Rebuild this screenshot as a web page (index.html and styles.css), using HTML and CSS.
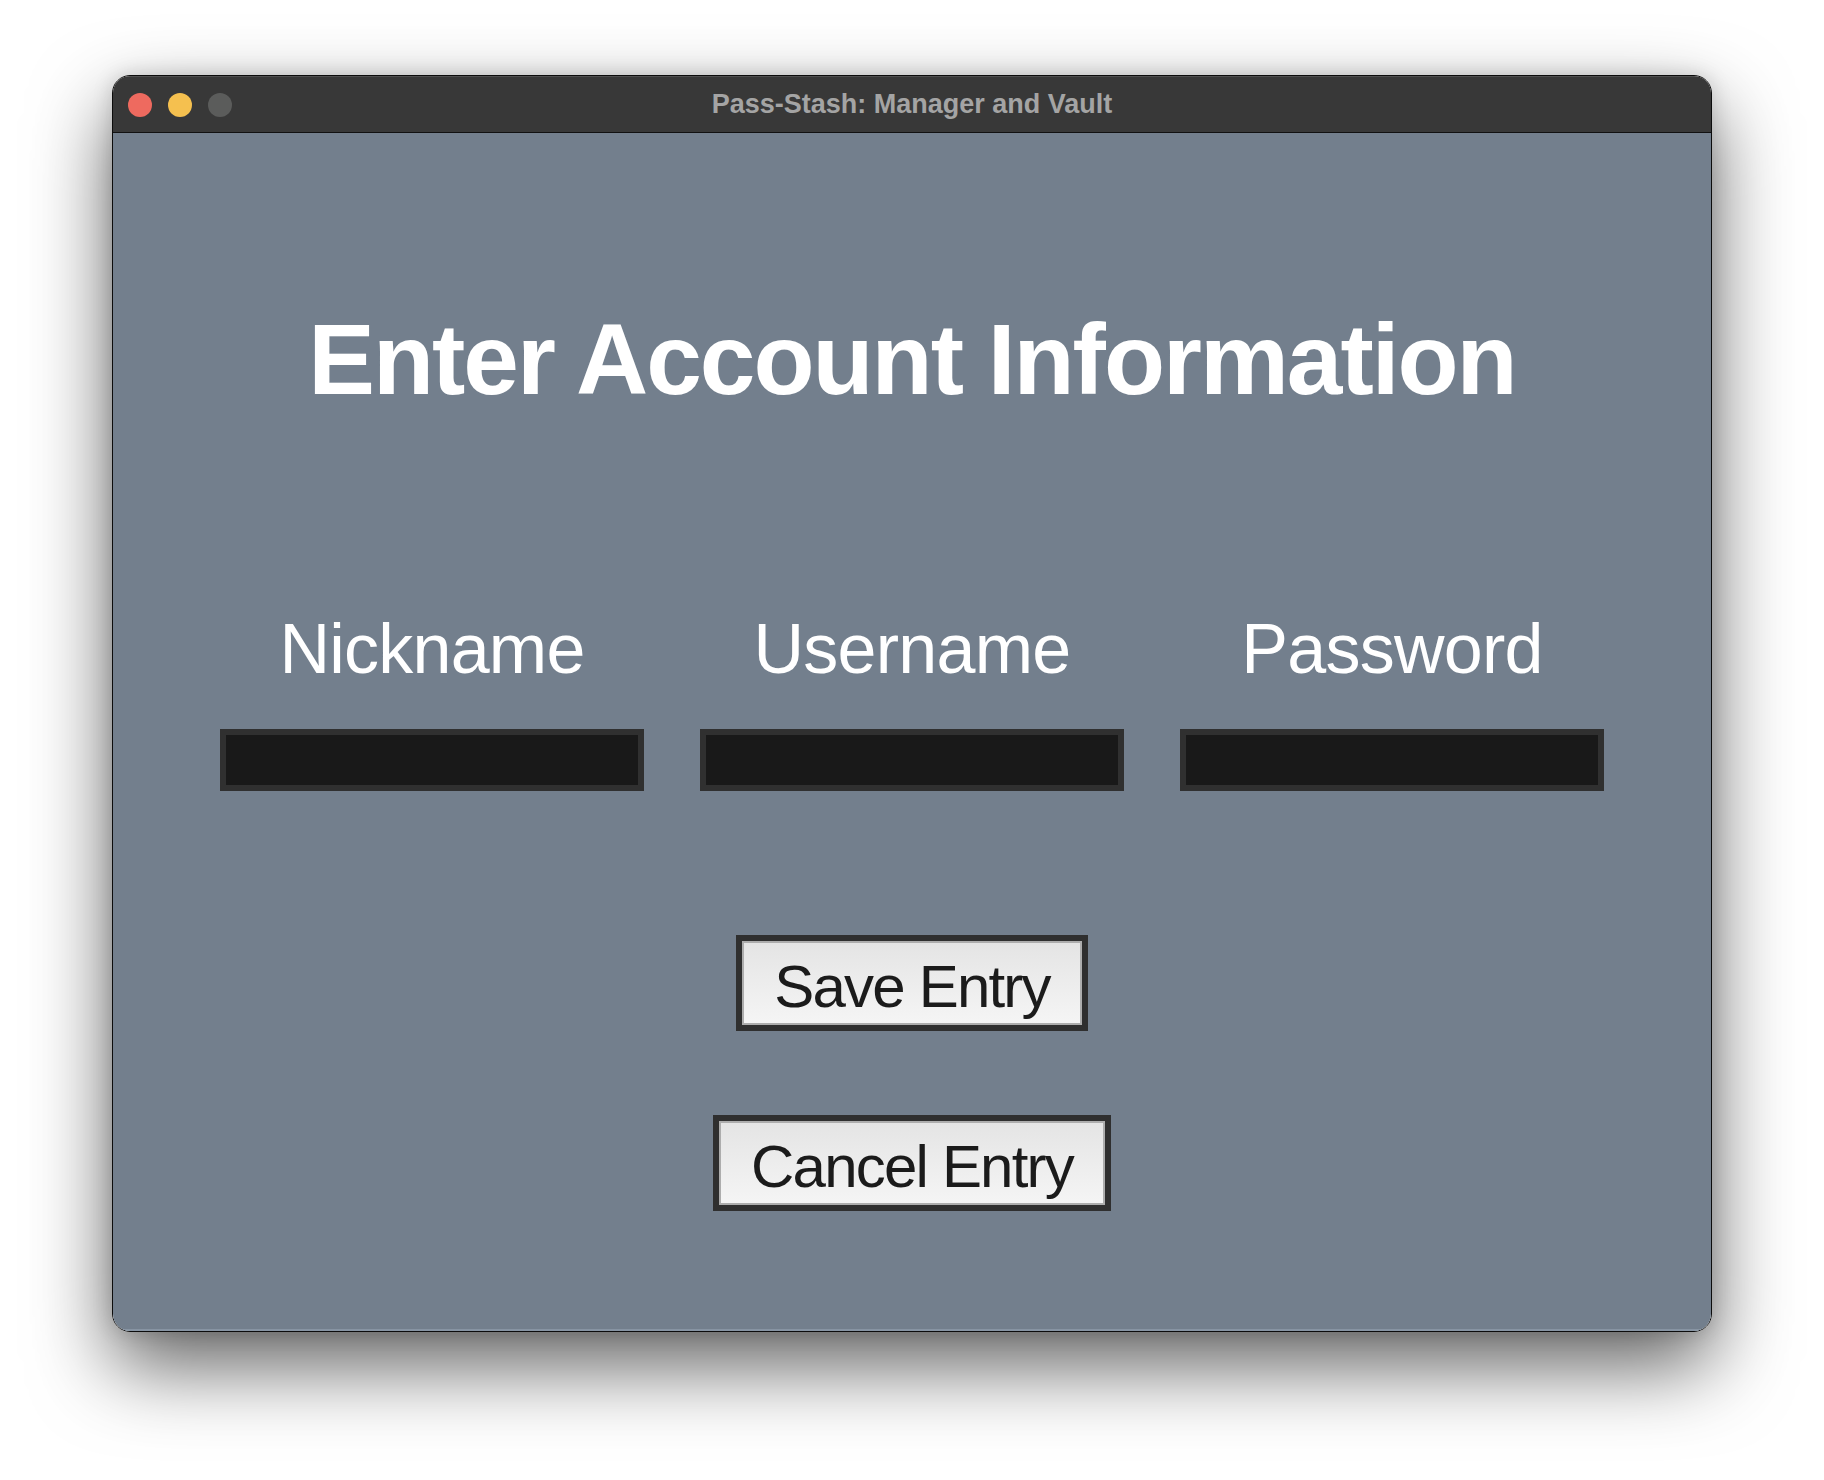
FILE: index.html
```html
<!DOCTYPE html>
<html lang="en">
<head>
<meta charset="utf-8">
<title>Pass-Stash: Manager and Vault</title>
<link rel="stylesheet" href="styles.css">
</head>
<body>
  <div class="window">
    <div class="titlebar">
      <div class="lights">
        <span class="light red"></span>
        <span class="light yellow"></span>
        <span class="light gray"></span>
      </div>
      <div class="title">Pass-Stash: Manager and Vault</div>
      <div class="spacer"></div>
    </div>
    <div class="content">
      <h1 class="heading">Enter Account Information</h1>
      <div class="fields">
        <div class="field">
          <div class="label">Nickname</div>
          <div class="entry"></div>
        </div>
        <div class="field">
          <div class="label">Username</div>
          <div class="entry"></div>
        </div>
        <div class="field">
          <div class="label">Password</div>
          <div class="entry"></div>
        </div>
      </div>
      <button class="btn btn-save">Save Entry</button>
      <button class="btn btn-cancel">Cancel Entry</button>
    </div>
  </div>
</body>
</html>
```
FILE: styles.css
```css
* { box-sizing: border-box; }

html, body {
  margin: 0;
  padding: 0;
  background: #ffffff;
  font-family: "Liberation Sans", Arial, sans-serif;
}

body {
  padding: 75px 0 0 112px;
  width: 1824px;
  height: 1480px;
  overflow: hidden;
}

.window {
  width: 1600px;
  height: 1257px;
  border: 1px solid #0c0c0c;
  border-radius: 18px;
  overflow: hidden;
  display: flex;
  flex-direction: column;
  box-shadow: 0 34px 80px rgba(0, 0, 0, 0.62), 0 0 20px rgba(0, 0, 0, 0.15);
}

.titlebar {
  height: 57px;
  flex: none;
  background: #383838;
  border-bottom: 1px solid #111111;
  display: grid;
  grid-template-columns: 1fr auto 1fr;
  align-items: center;
  box-shadow: inset 0 1px 0 rgba(255, 255, 255, 0.12);
}

.lights {
  display: flex;
  gap: 16px;
  padding-left: 15px;
}

.light {
  width: 24px;
  height: 24px;
  border-radius: 50%;
  display: block;
}
.red { background: #ee6a5f; }
.yellow { background: #f5c04f; }
.gray { background: #5b5c5b; }

.title {
  font-weight: bold;
  font-size: 27px;
  line-height: 56px;
  padding-bottom: 2px;
  color: #a4a4a4;
  white-space: nowrap;
}

.content {
  flex: 1;
  background: #737f8d;
  display: flex;
  flex-direction: column;
  align-items: center;
  box-shadow: inset 0 -2px 0 rgba(160, 175, 190, 0.45);
}

.heading {
  margin: 176px 0 0;
  font-size: 100px;
  line-height: 100px;
  font-weight: bold;
  letter-spacing: -2px;
  color: #ffffff;
  white-space: nowrap;
}

.fields {
  margin-top: 205px;
  display: grid;
  grid-template-columns: repeat(3, 424px);
  column-gap: 56px;
}

.field {
  display: flex;
  flex-direction: column;
  align-items: center;
}

.label {
  font-size: 70px;
  line-height: 70px;
  letter-spacing: -0.75px;
  color: #ffffff;
  white-space: nowrap;
}

.entry {
  margin-top: 45px;
  width: 424px;
  height: 62px;
  background: #191919;
  border: 6px solid #303030;
}

.btn {
  display: block;
  height: 96px;
  padding: 8px 32px 0;
  border: 6px solid #2f2f2f;
  box-shadow: inset 0 0 0 2px #adadad;
  background: linear-gradient(#e4e4e4, #f5f5f5);
  font-family: "Liberation Sans", Arial, sans-serif;
  font-size: 60px;
  line-height: 76px;
  letter-spacing: -1.8px;
  color: #1b1b1b;
  white-space: nowrap;
  border-radius: 0;
}

.btn-save { margin-top: 144px; }
.btn-cancel { margin-top: 84px; }
```
